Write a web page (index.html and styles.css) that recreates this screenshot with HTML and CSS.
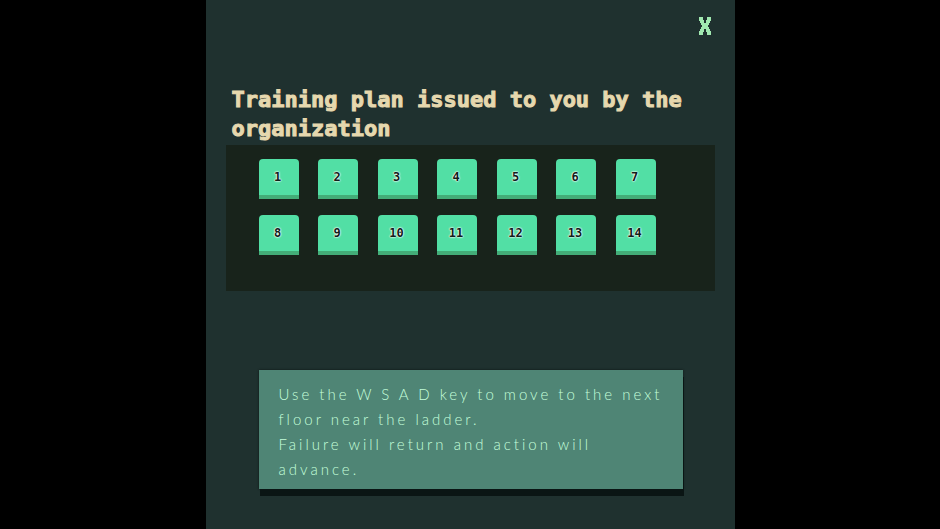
FILE: index.html
```html
<!doctype html>
<html lang="en">
  <head>
    <meta charset="utf-8" />
    <meta name="viewport" content="width=device-width, initial-scale=1" />
    <title>Training plan</title>
    <link rel="stylesheet" href="styles.css">
  </head>

  <body>
    <main class="screen">
      <header class="top-bar">
        <button type="button" class="close" aria-label="Close">
          <svg viewBox="0 0 12 18" width="12" height="18" aria-hidden="true">
            <path
              d="M0 0h4v3h1v3h2v-3h1v-3h4v4h-1v2h-1v2h-1v2h1v2h1v2h1v4h-4v-3h-1v-3h-2v3h-1v3h-4v-4h1v-2h1v-2h1v-2h-1v-2h-1v-2h-1z"
            />
          </svg>
        </button>
      </header>

      <h1>Training plan issued to you by the organization</h1>

      <div class="levels">
        <button type="button" class="level">1</button>
        <button type="button" class="level">2</button>
        <button type="button" class="level">3</button>
        <button type="button" class="level">4</button>
        <button type="button" class="level">5</button>
        <button type="button" class="level">6</button>
        <button type="button" class="level">7</button>
        <button type="button" class="level">8</button>
        <button type="button" class="level">9</button>
        <button type="button" class="level">10</button>
        <button type="button" class="level">11</button>
        <button type="button" class="level">12</button>
        <button type="button" class="level">13</button>
        <button type="button" class="level">14</button>
      </div>

      <p class="hint">
        Use the W S A D key to move to the next floor near the ladder.<br />
        Failure will return and action will advance.
      </p>
    </main>
  </body>
</html>
```
FILE: styles.css
```css
* {
  box-sizing: border-box;
}

body {
  background: #000;
  margin: 0;
}

.screen {
  background: #1f312f;
  display: flex;
  flex-direction: column;
  margin: 0 auto;
  max-width: 100vh;
  min-height: 100vh;
  padding: 0 20px 32px;
}

.top-bar {
  display: flex;
  justify-content: flex-end;
  padding: 17px 4px 0;
}

.close {
  background: none;
  border: 0;
  cursor: pointer;
  display: block;
  padding: 0;
}

.close svg {
  display: block;
  fill: #a0e8b0;
}

h1 {
  -webkit-text-stroke: 1px #e6d8ae;
  color: #e6d8ae;
  font: bold 22px/29px "DejaVu Sans Mono", monospace;
  margin: 50px 0 0;
  padding: 0 6px;
}

.levels {
  background: #18231b;
  display: grid;
  gap: 16px;
  grid-template-columns: repeat(7, 40px);
  justify-content: space-between;
  margin-top: 2px;
  padding: 14px 59px 36px 33px;
}

.level {
  background: #52dfa5;
  border: 0;
  border-bottom: 4px solid #43ad78;
  border-radius: 4px 4px 0 0;
  color: #10201a;
  cursor: pointer;
  font: bold 12px/16px "DejaVu Sans Mono", monospace;
  height: 40px;
  padding: 0 2px 0 0;
  text-shadow: 0 0 2px #fff, 0 0 2px #fff, 0 0 1px #fff;
}

.hint {
  background: #4f8575;
  box-shadow: 1px 7px 0 #0a1514, 0 0 2px #0a1514;
  color: #c4ffda;
  font: 300 15px/25px Lato, sans-serif;
  letter-spacing: 3px;
  margin: auto 32px 8px 33px;
  padding: 12px 12px 7px 20px;
}
```
